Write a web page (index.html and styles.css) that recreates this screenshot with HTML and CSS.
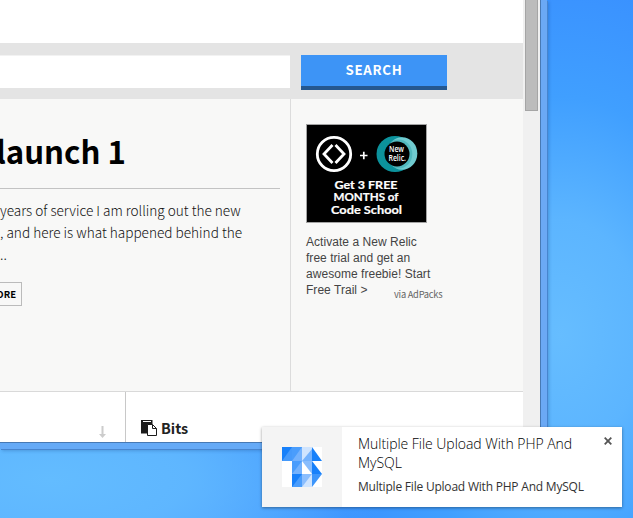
FILE: index.html
```html
<!DOCTYPE html>
<html lang="en">
<head>
<meta charset="utf-8">
<title>Desktop notification</title>
<link rel="stylesheet" href="styles.css">
</head>
<body>
<div class="window">
  <div class="page">
    <div class="topbar"></div>
    <div class="search"><div class="field"></div><button class="search-btn">SEARCH</button></div>
    <div class="main">
      <article class="post">
        <h1>launch 1</h1>
        <div class="excerpt">
          <p>years of service I am rolling out the new</p>
          <p>, and here is what happened behind the</p>
          <p>..</p>
        </div>
        <div class="more"><span>ORE</span></div>
      </article>
      <aside class="side">
        <div class="ad">
          <svg width="121" height="99" viewBox="0 0 121 99">
            <rect x=".5" y=".5" width="120" height="98" fill="#000" stroke="#a3a3a3"/>
            <circle cx="28" cy="30" r="16.700" fill="none" stroke="#fff" stroke-width="2.800"/>
            <path d="M26.500 21l-8.500 9 8.500 9M29.500 21l8.500 9-8.500 9" fill="none" stroke="#fff" stroke-width="2.800"/>
            <path d="M54 31.500h7.500M57.800 27.700v7.600" stroke="#fff" stroke-width="1.700"/>
            <ellipse cx="89" cy="30" rx="18.500" ry="18" fill="#0c929c"/>
            <ellipse cx="96" cy="29.500" rx="15.300" ry="16.300" fill="#70cbd0"/>
            <ellipse cx="92.500" cy="30" rx="13.800" ry="14.500" fill="#0b8d96" opacity=".3"/>
            <circle cx="91" cy="30" r="12.500" fill="#000"/>
            <g class="relic"><text x="83" y="28" textLength="15" lengthAdjust="spacingAndGlyphs">New</text><text x="82.500" y="36.500" textLength="17.500" lengthAdjust="spacingAndGlyphs">Relic.</text></g>
            <g class="promo"><text x="28.500" y="64.500" textLength="63" lengthAdjust="spacingAndGlyphs">Get 3 FREE</text><text x="27.500" y="77" textLength="65" lengthAdjust="spacingAndGlyphs">MONTHS of</text><text x="25" y="90" textLength="71" lengthAdjust="spacingAndGlyphs">Code School</text></g>
          </svg>
        </div>
        <p class="ad-text">Activate a New Relic<br>free trial and get an<br>awesome freebie! Start<br>Free Trail &gt;</p>
        <span class="via">via AdPacks</span>
      </aside>
    </div>
    <div class="columns">
      <div class="col-left">
        <svg width="7" height="12" viewBox="0 0 7 12"><path d="M2.500 0h2v8H7L3.500 12 0 8h2.500z" fill="#ccc"/></svg>
      </div>
      <div class="col-right">
        <svg width="16" height="16" viewBox="0 0 16 16"><path d="M0 0h11.500v4H7v9.500H0z" fill="#1c1c1c"/><path d="M2 1.500h8" stroke="#fff"/><path d="M6.500 4.500h5l4 4v7h-9z" fill="#fff" stroke="#1c1c1c"/><path d="M11.500 4.500v4h4" fill="none" stroke="#1c1c1c"/></svg>
        <h2>Bits</h2>
      </div>
    </div>
  </div>
  <div class="scrollbar"><div class="thumb"></div></div>
</div>
<div class="toast">
  <div class="toast-icon">
    <svg width="40" height="40" viewBox="0 0 40 40">
      <path fill="#fff" d="M0 0h40v40H0z"/>
      <path fill="#469afb" d="M0 0h10v14H0z"/><path fill="#1780fa" d="M0 0h10L0 14z"/>
      <path fill="#74b2fd" d="M10 0h10v14H10z"/><path fill="#4a9dfc" d="M10 0h10L10 14z"/>
      <path fill="#74b2fd" d="M20 0h10v14H20z"/><path fill="#cfe4fe" d="M20 0h10v2L20 14z"/>
      <path fill="#1780fa" d="M30 0l10 14H30z"/>
      <path fill="#74b2fd" d="M10 14h10v13H10z"/><path fill="#4a9dfc" d="M10 14h10L10 27z"/>
      <path fill="#74b2fd" d="M20 14h10v13z" opacity=".85"/>
      <path fill="#1780fa" d="M30 14l10 13H30z"/>
      <path fill="#4a9dfc" d="M10 27h10v13H10z"/><path fill="#1780fa" d="M10 27h10L10 40z"/>
      <path fill="#cfe4fe" d="M20 27h10v13H20z"/><path fill="#74b2fd" d="M20 27h10L20 40z" opacity=".75"/>
      <path fill="#3c95fb" d="M30 27h10L30 40z"/>
    </svg>
  </div>
  <div class="toast-body">
    <div class="toast-title">Multiple File Upload With PHP And<br>MySQL</div>
    <div class="toast-msg">Multiple File Upload With PHP And MySQL</div>
  </div>
  <svg class="close" width="8" height="8" viewBox="0 0 8 8"><path d="M.7.700l6.600 6.600M7.300.700L.7 7.300" stroke="#555" stroke-width="1.800"/></svg>
</div>
</body>
</html>
```
FILE: styles.css
```css
* { box-sizing: border-box; margin: 0; padding: 0; }
body {
  width: 633px; height: 518px; overflow: hidden; position: relative;
  font-family: "Noto Sans CJK SC", "Noto Sans", sans-serif;
  background:
    radial-gradient(ellipse 340px 130px at 50px 480px, #63bcff 0%, rgba(99,188,255,.8) 40%, rgba(99,188,255,0) 100%),
    radial-gradient(ellipse 250px 350px at 560px 335px, #66bdff 0%, #5cb5ff 33%, #409fff 68%, #3a92ff 100%, rgba(58,146,255,0) 150%),
    #4c9fff;
}
.window {
  display: flex; width: 547px; height: 449px;
  border-right: 6px solid #6ba9f5; border-bottom: 6px solid #65aaf7;
  box-shadow: 1px 1px 0 #4785cf, 2px 2px 3px rgba(20,60,120,.25);
}
.page { width: 523px; height: 443px; display: flex; flex-direction: column; background: #fff; border-bottom: 1px solid #4779b4; overflow: hidden; }
.topbar { height: 43px; }
.search { height: 56px; background: #e4e4e4; padding-top: 12px; display: flex; gap: 11px; }
.field { width: 290px; height: 33px; background: #fff; border-top: 1px solid #f2f2f2; }
.search-btn {
  width: 146px; height: 35px; border: 0; border-bottom: 4px solid #25578f; padding-bottom: 2px;
  background: #3d94f6; color: #fff; font: bold 13.3px/29px "Noto Sans CJK SC", sans-serif; letter-spacing: .7px;
}
.main { height: 293px; display: flex; background: #f8f8f7; border-bottom: 1px solid #d9d9d9; }
.post { width: 291px; border-right: 1px solid #dcdcdc; padding: 27px 10px 0 0; }
h1 { height: 63px; border-bottom: 1px solid #c3c3c3; font-size: 31.2px; line-height: 50px; color: #000; white-space: nowrap; text-indent: -4px; }
.excerpt { padding-top: 10px; font-size: 13.62px; line-height: 22px; color: #111; font-weight: 300; white-space: nowrap; }
.more { margin-top: 17px; width: 22px; height: 24px; border: 1px solid #bbb; border-left: 0; display: flex; justify-content: flex-end; padding-right: 5px; font-size: 9.5px; line-height: 22px; font-weight: bold; color: #000; }
.side { padding: 25px 0 0 15px; width: 170px; }
.ad { height: 99px; }
.ad svg, .col-left svg, .col-right svg { display: block; }
.relic { font: 600 8.5px "Open Sans", sans-serif; fill: #fff; }
.promo { font: bold 11px Lato, sans-serif; fill: #fff; stroke: #fff; stroke-width: .2px; }
.ad-text { margin-top: 11px; font: 12px/16px "Liberation Sans", sans-serif; color: #444; white-space: nowrap; letter-spacing: .04px; }
.via { display: block; margin: -11px 0 0 88px; font-size: 9.3px; line-height: 14px; color: #666; white-space: nowrap; letter-spacing: -.25px; }
.columns { height: 50px; display: flex; }
.col-left { width: 126px; border-right: 1px solid #c8c8c8; padding: 34px 0 0 99px; }
.col-right { display: flex; padding: 28px 0 0 15px; gap: 4px; }
h2 { font-size: 14.4px; line-height: 15px; color: #222; }
.scrollbar { width: 18px; height: 443px; background: #f0f0f0; padding-left: 2px; border-right: 1px solid #4779b4; border-bottom: 1px solid #4779b4; }
.thumb { width: 13px; height: 111px; background: #bcbcbc; border: 1px solid #a5a5a5; border-top: 0; }
.toast {
  position: absolute; left: 262px; top: 427px; width: 360px; height: 80px; display: flex;
  background: #fff; box-shadow: 0 1px 3px rgba(0,0,0,.4);
}
.toast-icon { width: 80px; background: #f4f4f4; padding: 20px; }
.toast-icon svg { display: block; }
.toast-body { padding: 7px 0 0 16px; font-family: "Open Sans", "Noto Sans", sans-serif; color: #000; white-space: nowrap; }
.toast-title { font-size: 14px; line-height: 19px; font-weight: 300; letter-spacing: -.04px; }
.toast-msg { font-size: 12px; line-height: 16px; margin-top: 7px; letter-spacing: -.21px; color: #333; }
.close { position: absolute; right: 10px; top: 10px; }
```
